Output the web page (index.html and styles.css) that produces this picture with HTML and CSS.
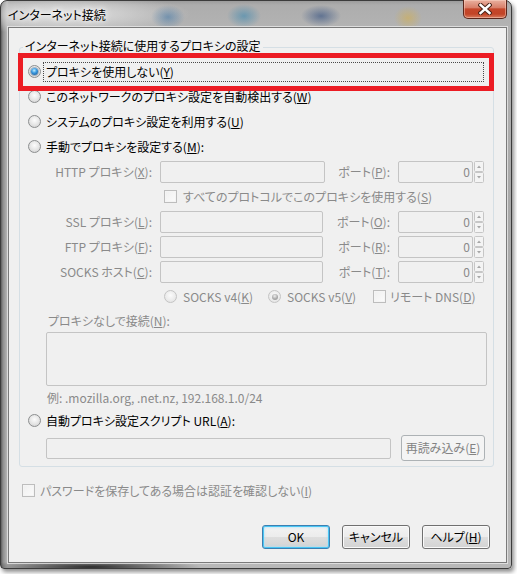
FILE: index.html
```html
<!DOCTYPE html>
<html lang="ja">
<head>
<meta charset="utf-8">
<title>インターネット接続</title>
<link rel="stylesheet" href="styles.css">
</head>
<body>
<div class="window">
  <div class="titlebar">
    <span class="title">インターネット接続</span>
    <button class="close" type="button" aria-label="閉じる">
      <svg width="14" height="12" viewBox="0 0 14 12">
        <path d="M2.5 2 L11.5 10 M11.5 2 L2.5 10" stroke="#4a2418" stroke-width="4.4" stroke-linecap="square" fill="none"/>
        <path d="M2.5 2 L11.5 10 M11.5 2 L2.5 10" stroke="#ffffff" stroke-width="2.4" stroke-linecap="square" fill="none"/>
      </svg>
    </button>
  </div>
  <div class="client">
    <div class="group">
      <div class="group-title">インターネット接続に使用するプロキシの設定</div>

      <div class="row opt first">
        <span class="radio on"></span><span class="lbl focus">プロキシを使用しない(<u>Y</u>)</span>
      </div>
      <div class="row opt">
        <span class="radio"></span><span class="lbl">このネットワークのプロキシ設定を自動検出する(<u>W</u>)</span>
      </div>
      <div class="row opt">
        <span class="radio"></span><span class="lbl">システムのプロキシ設定を利用する(<u>U</u>)</span>
      </div>
      <div class="row opt">
        <span class="radio"></span><span class="lbl">手動でプロキシを設定する(<u>M</u>):</span>
      </div>

      <div class="row field">
        <span class="flabel">HTTP プロキシ(<u>X</u>):</span>
        <span class="input host"></span>
        <span class="plabel">ポート(<u>P</u>):</span>
        <span class="input port">0</span>
        <svg class="spin" width="10" height="22" viewBox="0 0 10 22">
          <rect x="0.5" y="0.5" width="9" height="10" rx="1" fill="#f4f4f4" stroke="#c6c6c6"/>
          <rect x="0.5" y="11.5" width="9" height="10" rx="1" fill="#f4f4f4" stroke="#c6c6c6"/>
          <path d="M3 7 L5 4.5 L7 7 Z" fill="#a6a6a6"/>
          <path d="M3 15 L5 17.5 L7 15 Z" fill="#a6a6a6"/>
        </svg>
      </div>
      <div class="row field shareall">
        <span class="check dis"></span><span class="ctext dis">すべてのプロトコルでこのプロキシを使用する(<u>S</u>)</span>
      </div>
      <div class="row field">
        <span class="flabel">SSL プロキシ(<u>L</u>):</span>
        <span class="input host short"></span>
        <span class="plabel wide">ポート(<u>O</u>):</span>
        <span class="input port">0</span>
        <svg class="spin" width="10" height="22" viewBox="0 0 10 22">
          <rect x="0.5" y="0.5" width="9" height="10" rx="1" fill="#f4f4f4" stroke="#c6c6c6"/>
          <rect x="0.5" y="11.5" width="9" height="10" rx="1" fill="#f4f4f4" stroke="#c6c6c6"/>
          <path d="M3 7 L5 4.5 L7 7 Z" fill="#a6a6a6"/>
          <path d="M3 15 L5 17.5 L7 15 Z" fill="#a6a6a6"/>
        </svg>
      </div>
      <div class="row field">
        <span class="flabel">FTP プロキシ(<u>F</u>):</span>
        <span class="input host short"></span>
        <span class="plabel wide">ポート(<u>R</u>):</span>
        <span class="input port">0</span>
        <svg class="spin" width="10" height="22" viewBox="0 0 10 22">
          <rect x="0.5" y="0.5" width="9" height="10" rx="1" fill="#f4f4f4" stroke="#c6c6c6"/>
          <rect x="0.5" y="11.5" width="9" height="10" rx="1" fill="#f4f4f4" stroke="#c6c6c6"/>
          <path d="M3 7 L5 4.5 L7 7 Z" fill="#a6a6a6"/>
          <path d="M3 15 L5 17.5 L7 15 Z" fill="#a6a6a6"/>
        </svg>
      </div>
      <div class="row field">
        <span class="flabel">SOCKS ホスト(<u>C</u>):</span>
        <span class="input host short"></span>
        <span class="plabel wide">ポート(<u>T</u>):</span>
        <span class="input port">0</span>
        <svg class="spin" width="10" height="22" viewBox="0 0 10 22">
          <rect x="0.5" y="0.5" width="9" height="10" rx="1" fill="#f4f4f4" stroke="#c6c6c6"/>
          <rect x="0.5" y="11.5" width="9" height="10" rx="1" fill="#f4f4f4" stroke="#c6c6c6"/>
          <path d="M3 7 L5 4.5 L7 7 Z" fill="#a6a6a6"/>
          <path d="M3 15 L5 17.5 L7 15 Z" fill="#a6a6a6"/>
        </svg>
      </div>
      <div class="row field socks">
        <span class="sitem w1"><span class="radio dis"></span><span class="dis">SOCKS v4(<u>K</u>)</span></span>
        <span class="sitem w2"><span class="radio dis on"></span><span class="dis">SOCKS v5(<u>V</u>)</span></span>
        <span class="sitem w3"><span class="check dis"></span><span class="dis">リモート DNS(<u>D</u>)</span></span>
      </div>

      <div class="row noproxy dis">プロキシなしで接続(<u>N</u>):</div>
      <div class="input area"></div>
      <div class="row example dis">例: .mozilla.org, .net.nz, 192.168.1.0/24</div>

      <div class="row opt">
        <span class="radio"></span><span class="lbl">自動プロキシ設定スクリプト URL(<u>A</u>):</span>
      </div>
      <div class="row urlrow">
        <span class="input url"></span>
        <button class="btn reload" type="button" disabled>再読み込み(<u>E</u>)</button>
      </div>
    </div>

    <div class="row pwrow">
      <span class="check dis"></span><span class="ctext dis">パスワードを保存してある場合は認証を確認しない(<u>I</u>)</span>
    </div>

    <div class="row buttons">
      <button class="btn default" type="button">OK</button>
      <button class="btn" type="button">キャンセル</button>
      <button class="btn" type="button">ヘルプ(<u>H</u>)</button>
    </div>
  </div>
</div>
<div class="highlight"></div>
</body>
</html>
```

FILE: styles.css
```css
* {
  box-sizing: border-box;
}

html,
body {
  margin: 0;
  padding: 0;
  background: #ffffff;
}

body {
  width: 517px;
  height: 574px;
  overflow: hidden;
  position: relative;
  font-family: "Noto Sans CJK JP", "Noto Sans", sans-serif;
  font-size: 12px;
  font-feature-settings: "palt";
  color: #000000;
}

u {
  text-decoration: underline;
  text-underline-offset: 1px;
}

/* ---------- window frame ---------- */
.window {
  width: 512px;
  height: 569px;
  border: 1px solid #3c3c3c;
  border-radius: 7px 7px 4px 4px;
  padding: 0 4px 5px 7px;
  display: flex;
  flex-direction: column;
  box-shadow: 2px 3px 4px rgba(0, 0, 0, 0.45);
  background:
    radial-gradient(ellipse 17px 12px at 167px 16px, rgba(70, 120, 165, 0.6), rgba(70, 120, 165, 0)),
    radial-gradient(ellipse 17px 12px at 243px 15px, rgba(60, 135, 175, 0.6), rgba(60, 135, 175, 0)),
    radial-gradient(ellipse 20px 11px at 320px 15px, rgba(45, 75, 125, 0.6), rgba(45, 75, 125, 0)),
    radial-gradient(ellipse 14px 12px at 407px 17px, rgba(205, 175, 95, 0.7), rgba(205, 175, 95, 0)),
    radial-gradient(ellipse 130px 20px at 60px 13px, rgba(232, 232, 232, 0.95), rgba(232, 232, 232, 0)),
    radial-gradient(ellipse 110px 8px at 90px 566px, rgba(20, 20, 20, 0.85), rgba(20, 20, 20, 0)),
    linear-gradient(to right, #5e5e5e 0, #8e8e8e 2px, #b4b4b4 6px, rgba(180, 180, 180, 0) 8px),
    linear-gradient(to bottom, #9c9c9c 0, #adadad 4px, #b3b3b3 26px, #a9a9a9 200px, #b0b0b0 400px, #b8b8b8 100%);
}

.titlebar {
  flex: none;
  height: 26px;
  display: flex;
  justify-content: space-between;
  align-items: flex-start;
}

.title {
  margin-top: 6px;
  line-height: 16px;
  color: #000;
  text-shadow: 0 0 5px #ffffff, 0 0 9px #ffffff;
}

.close {
  width: 44px;
  height: 19px;
  margin-top: -1px;
  padding: 0;
  border: 1px solid #5a261b;
  border-top: none;
  border-radius: 0 0 5px 5px;
  background: linear-gradient(#e9b09f 0, #d8806a 42%, #c4462a 50%, #c24426 78%, #d77c5f 100%);
  box-shadow: inset 0 0 0 1px rgba(255, 220, 205, 0.45);
  display: flex;
  align-items: center;
  justify-content: center;
}

.client {
  flex: 1;
  border: 1px solid #7a7a7a;
  background: #f0f0f0;
  display: flex;
  flex-direction: column;
  box-shadow: 0 0 0 1px rgba(235, 235, 235, 0.75);
}

/* ---------- group box ---------- */
.group {
  flex: none;
  margin: 19px 12px 0 10px;
  height: 420px;
  border: 1px solid #d5dfe5;
  border-radius: 3px;
  display: flex;
  flex-direction: column;
}

.group-title {
  align-self: flex-start;
  margin: -10px 0 0 3px;
  padding: 0 2px;
  height: 16px;
  line-height: 16px;
  background: #f0f0f0;
}

.row {
  flex: none;
  display: flex;
  align-items: center;
  white-space: nowrap;
}

.dis {
  color: #8a8a8a;
}

.opt {
  height: 25px;
}

.opt.first {
  margin-top: 5px;
}

.opt .radio {
  margin-left: 8px;
}

.lbl {
  margin-left: 2px;
  padding: 0 2px;
  border: 1px solid transparent;
  line-height: 18px;
}

.lbl.focus {
  flex: 1;
  margin-right: 9px;
  border: 1px dotted #4a4a4a;
}

/* radio & checkbox glyphs */
.radio {
  flex: none;
  width: 13px;
  height: 13px;
  border-radius: 50%;
  border: 1px solid #8c8e8f;
  background: radial-gradient(circle at 50% 40%, #fcfcfc 0, #e9e9e9 45%, #cdcdcd 100%);
  display: flex;
  align-items: center;
  justify-content: center;
}

.radio.on::after {
  content: "";
  width: 7px;
  height: 7px;
  border-radius: 50%;
  background: radial-gradient(circle at 45% 35%, #c2efff 0, #3e9de3 40%, #0e4885 100%);
  box-shadow: 0 0 0 1px rgba(40, 80, 120, 0.35);
}

.radio.dis {
  border-color: #c4c4c4;
  background: radial-gradient(circle at 50% 40%, #fbfbfb 0, #ececec 55%, #dedede 100%);
}

.radio.dis.on::after {
  width: 6px;
  height: 6px;
  background: radial-gradient(circle at 45% 35%, #eeeeee 0, #aaaaaa 55%, #8e8e8e 100%);
  box-shadow: none;
}

.check {
  flex: none;
  width: 13px;
  height: 13px;
  border: 1px solid #8e8f8f;
  background: linear-gradient(135deg, #d6d6d6, #ffffff);
  box-shadow: inset 0 0 0 1px #f4f4f4;
}

.check.dis {
  border-color: #bdbdbd;
  background: linear-gradient(135deg, #efefef, #fbfbfb);
}

/* ---------- proxy fields ---------- */
.field {
  height: 25px;
}

.flabel {
  flex: none;
  width: 132px;
  text-align: right;
  color: #8a8a8a;
}

.input {
  flex: none;
  height: 22px;
  border: 1px solid #c4c4c4;
  border-radius: 2px;
  background: #f0f0f0;
}

.host {
  width: 165px;
  margin-left: 8px;
}

.host.short {
  width: 163px;
}

.plabel {
  flex: none;
  width: 65px;
  text-align: right;
  color: #8a8a8a;
}

.plabel.wide {
  width: 67px;
}

.port {
  width: 75px;
  margin-left: 8px;
  padding-right: 2px;
  display: flex;
  align-items: center;
  justify-content: flex-end;
  color: #8a8a8a;
}

.spin {
  flex: none;
  margin-left: 1px;
}

.shareall .check {
  margin-left: 144px;
}

.ctext {
  margin-left: 6px;
}

.socks {
  padding-left: 144px;
}

.sitem {
  flex: none;
  display: flex;
  align-items: center;
  gap: 6px;
}

.w1 {
  width: 104px;
}

.w2 {
  width: 105px;
}

.w3 {
  gap: 4px;
}

.noproxy {
  height: 22px;
  padding-left: 28px;
}

.area {
  margin: 1px 0 0 26px;
  width: 441px;
  height: 54px;
}

.example {
  height: 22px;
  padding-left: 27px;
}

.urlrow {
  margin-top: 2px;
  height: 26px;
}

.url {
  width: 345px;
  height: 21px;
  margin-left: 26px;
}

/* ---------- buttons ---------- */
.btn {
  flex: none;
  width: 68px;
  height: 24px;
  padding: 0;
  border: 1px solid #707070;
  border-radius: 3px;
  background: linear-gradient(#f3f3f3 0, #ececec 50%, #dedede 51%, #d3d3d3 100%);
  box-shadow: inset 0 0 0 1px #fafafa;
  font-family: inherit;
  font-size: 12px;
  font-feature-settings: "palt";
  color: #000;
  line-height: 20px;
}

.btn.default {
  border-color: #3c7fb1;
  box-shadow: inset 0 0 0 1px #49c6f4, inset 0 0 3px 1px #a8e0f8;
}

.btn.reload {
  width: 84px;
  height: 26px;
  margin-left: 10px;
  border-color: #adb2b5;
  background: #f4f4f4;
  box-shadow: none;
  color: #838383;
}

.pwrow {
  margin-top: 13px;
  height: 20px;
}

.pwrow .check {
  margin-left: 13px;
}

.pwrow .ctext {
  margin-left: 5px;
}

.buttons {
  margin-top: auto;
  margin-bottom: 13px;
  padding-right: 16px;
  justify-content: flex-end;
  gap: 12px;
}

/* ---------- annotation overlay ---------- */
.highlight {
  position: absolute;
  left: 18px;
  top: 53px;
  width: 476px;
  height: 38px;
  border: 5px solid #ec1c24;
  pointer-events: none;
}
```
